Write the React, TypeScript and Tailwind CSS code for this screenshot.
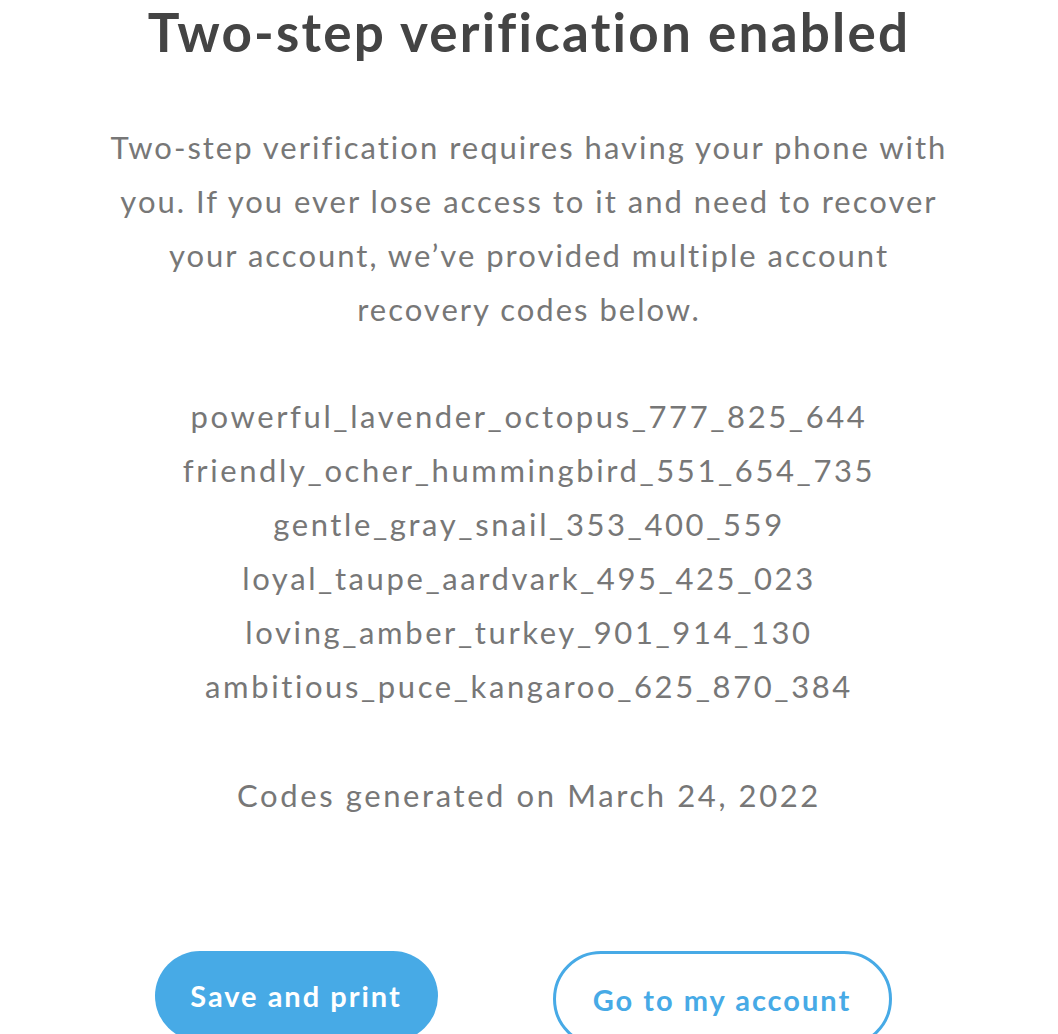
export default function App() {
  const codes = [
    "powerful_lavender_octopus_777_825_644",
    "friendly_ocher_hummingbird_551_654_735",
    "gentle_gray_snail_353_400_559",
    "loyal_taupe_aardvark_495_425_023",
    "loving_amber_turkey_901_914_130",
    "ambitious_puce_kangaroo_625_870_384",
  ]

  return (
    <div className="w-[1058px] h-[1034px] overflow-hidden bg-white font-['Lato',sans-serif]">
      <div className="flex flex-col items-center text-center">
        <h1 className="mt-[-4px] whitespace-nowrap text-[53px] leading-[72px] font-bold tracking-[2.2px] text-[#444444]">
          Two-step verification enabled
        </h1>
        <p className="mt-[52px] whitespace-nowrap text-[31px] leading-[54px] tracking-[2px] text-[#777777]">
          Two-step verification requires having your phone with
          <br />
          you. If you ever lose access to it and need to recover
          <br />
          your account, we’ve provided multiple account
          <br />
          recovery codes below.
        </p>
        <div className="mt-[53px] flex flex-col text-[31px] leading-[54px] tracking-[2.6px] text-[#777777]">
          {codes.map((code) => (
            <span key={code}>{code}</span>
          ))}
        </div>
        <p className="mt-[55px] text-[31px] leading-[54px] tracking-[2.6px] text-[#777777]">
          Codes generated on March 24, 2022
        </p>
        <div className="mt-[129px] flex gap-[115px] pr-[12px]">
          <button className="h-[90px] w-[283px] rounded-full bg-[#47aae6] text-[29px] font-bold tracking-[2px] text-white">
            Save and print
          </button>
          <button className="h-[96px] w-[339px] rounded-full border-[3px] border-[#47aae6] bg-white pt-[2px] text-[29px] font-bold tracking-[2px] text-[#47aae6]">
            Go to my account
          </button>
        </div>
      </div>
    </div>
  )
}
